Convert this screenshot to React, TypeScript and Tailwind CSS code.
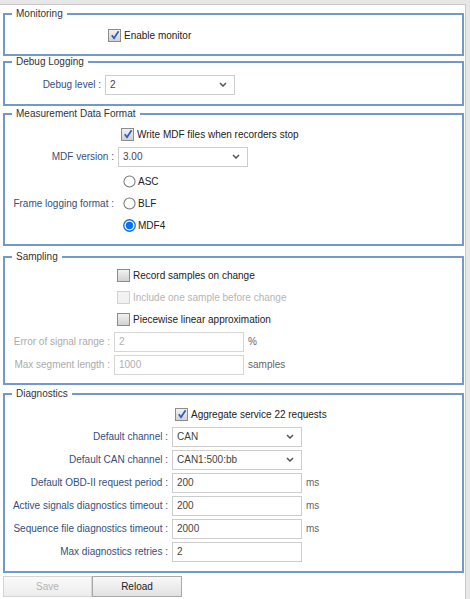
import type { ReactNode } from "react";

const Group = ({ title, className, children }: { title: string; className: string; children: ReactNode }) => (
  <fieldset className={`border-2 border-[#7199cc] p-0 ${className}`}>
    <legend className="ml-[7px] px-[4px] text-[10px] leading-[12px] text-[#333]">{title}</legend>
    {children}
  </fieldset>
);

const Check = ({ checked, disabled }: { checked?: boolean; disabled?: boolean }) => (
  <span
    className={`ml-[3px] mr-[3px] flex h-[13px] w-[13px] shrink-0 items-center justify-center border ${
      disabled ? "border-[#d2d2d2] bg-[#f2f2f2]" : "border-[#8c8c8c] bg-linear-to-b from-[#f1f1f1] to-[#d2d2d2]"
    }`}
  >
    {checked && (
      <svg viewBox="0 0 10 10" className="h-[10px] w-[10px]">
        <path d="M1.8 5.2 L4 8.2 L8.6 1.2" stroke="#2d5cc0" strokeWidth="1.7" fill="none" />
      </svg>
    )}
  </span>
);

const Radio = ({ checked }: { checked?: boolean }) => (
  <svg viewBox="0 0 14 14" className="ml-[5px] mr-[2px] h-[13px] w-[13px] shrink-0">
    {checked ? (
      <>
        <circle cx="7" cy="7" r="6.2" fill="#fff" stroke="#0b6ff0" strokeWidth="1.4" />
        <circle cx="7" cy="7" r="4" fill="#0b6ff0" />
      </>
    ) : (
      <circle cx="7" cy="7" r="6" fill="#fff" stroke="#767676" strokeWidth="1.1" />
    )}
  </svg>
);

const Label = ({ w, text, disabled }: { w: string; text: string; disabled?: boolean }) => (
  <div
    className={`${w} flex shrink-0 justify-end whitespace-nowrap pr-[4px] ${
      disabled ? "text-[#ababab]" : "text-[#34507e]"
    }`}
  >
    <span>{text} :</span>
  </div>
);

const Select = ({ value }: { value: string }) => (
  <div className="flex h-[20px] w-[130px] items-center justify-between border border-[#cdcdcd] bg-white pl-[4px] pr-[7px] text-[#444]">
    <span>{value}</span>
    <svg viewBox="0 0 8 5" className="h-[5px] w-[8px]">
      <path d="M1 1 L4 4 L7 1" stroke="#555" strokeWidth="1.5" fill="none" />
    </svg>
  </div>
);

const Input = ({ value, disabled }: { value: string; disabled?: boolean }) => (
  <div
    className={`flex h-[20px] w-[130px] items-center border bg-white pl-[4px] ${
      disabled ? "border-[#d6d6d6] text-[#b0b0b0]" : "border-[#cdcdcd] text-[#444]"
    }`}
  >
    {value}
  </div>
);

const Unit = ({ text }: { text: string }) => <span className="ml-[4px] text-[#666]">{text}</span>;

const CheckRow = ({
  w,
  label,
  checked,
  disabled,
}: {
  w: string;
  label: string;
  checked?: boolean;
  disabled?: boolean;
}) => (
  <div className="flex h-[22px] items-center">
    <div className={`${w} shrink-0`} />
    <Check checked={checked} disabled={disabled} />
    <span className={`whitespace-nowrap ${disabled ? "text-[#b5b5b5]" : "text-[#222]"}`}>{label}</span>
  </div>
);

const diagnostics = [
  { label: "Default OBD-II request period", value: "200", unit: "ms" },
  { label: "Active signals diagnostics timeout", value: "200", unit: "ms" },
  { label: "Sequence file diagnostics timeout", value: "2000", unit: "ms" },
  { label: "Max diagnostics retries", value: "2", unit: "" },
];

export default function App() {
  return (
    <div className="h-[599px] w-[470px] overflow-hidden bg-[#e7e7e7] pt-[4px] font-['Liberation_Sans',Arial,sans-serif] text-[10px]">
      <div className="h-full w-[466px] border-t border-r border-[#c9c9c9] bg-white pl-[3px] pt-[3px]">
        <div className="w-[461px]">
          {/* Monitoring */}
          <Group title="Monitoring" className="">
            <div className="pl-[10px] pt-[4px] pb-[8px]">
              <CheckRow w="w-[90px]" label="Enable monitor" checked />
            </div>
          </Group>

          {/* Debug */}
          <Group title="Debug Logging" className="mt-0">
            <div className="pl-[10px] pt-[5px] pb-[8px]">
              <div className="flex h-[23px] items-center">
                <Label w="w-[90px]" text="Debug level" />
                <Select value="2" />
              </div>
            </div>
          </Group>

          {/* MDF */}
          <Group title="Measurement Data Format" className="mt-[2px]">
            <div className="pl-[10px] pt-[3px] pb-[8px]">
              <CheckRow w="w-[103px]" label="Write MDF files when recorders stop" checked />
              <div className="flex h-[23px] items-center">
                <Label w="w-[103px]" text="MDF version" />
                <Select value="3.00" />
              </div>
              <div className="flex items-center pt-[2px]">
                <Label w="w-[103px]" text="Frame logging format" />
                <div className="flex flex-col">
                  {["ASC", "BLF", "MDF4"].map((f) => (
                    <div key={f} className="flex h-[22px] items-center text-[#222]">
                      <Radio checked={f === "MDF4"} />
                      {f}
                    </div>
                  ))}
                </div>
              </div>
            </div>
          </Group>

          {/* Sampling */}
          <Group title="Sampling" className="mt-[5px]">
            <div className="pl-[10px] pt-[1px] pb-[7px]">
              <CheckRow w="w-[99px]" label="Record samples on change" />
              <CheckRow w="w-[99px]" label="Include one sample before change" disabled />
              <CheckRow w="w-[99px]" label="Piecewise linear approximation" />
              <div className="flex h-[23px] items-center">
                <Label w="w-[99px]" text="Error of signal range" disabled />
                <Input value="2" disabled />
                <Unit text="%" />
              </div>
              <div className="flex h-[23px] items-center">
                <Label w="w-[99px]" text="Max segment length" disabled />
                <Input value="1000" disabled />
                <Unit text="samples" />
              </div>
            </div>
          </Group>

          {/* Diagnostics */}
          <Group title="Diagnostics" className="mt-[3px]">
            <div className="pl-[10px] pt-[3px] pb-[8px]">
              <CheckRow w="w-[157px]" label="Aggregate service 22 requests" checked />
              <div className="flex h-[23px] items-center">
                <Label w="w-[157px]" text="Default channel" />
                <Select value="CAN" />
              </div>
              <div className="flex h-[23px] items-center">
                <Label w="w-[157px]" text="Default CAN channel" />
                <Select value="CAN1:500:bb" />
              </div>
              {diagnostics.map((d) => (
                <div key={d.label} className="flex h-[23px] items-center">
                  <Label w="w-[157px]" text={d.label} />
                  <Input value={d.value} />
                  {d.unit && <Unit text={d.unit} />}
                </div>
              ))}
            </div>
          </Group>

          {/* Buttons */}
          <div className="mt-[3px] flex">
            <button className="h-[21px] w-[89px] border border-[#d4d4d4] bg-linear-to-b from-[#fafafa] to-[#ededed] text-[#b3b3b3]">
              Save
            </button>
            <button className="h-[21px] w-[90px] border border-[#a9a9a9] bg-linear-to-b from-[#f8f8f8] to-[#e2e2e2] text-[#222]">
              Reload
            </button>
          </div>
        </div>
      </div>
    </div>
  );
}
